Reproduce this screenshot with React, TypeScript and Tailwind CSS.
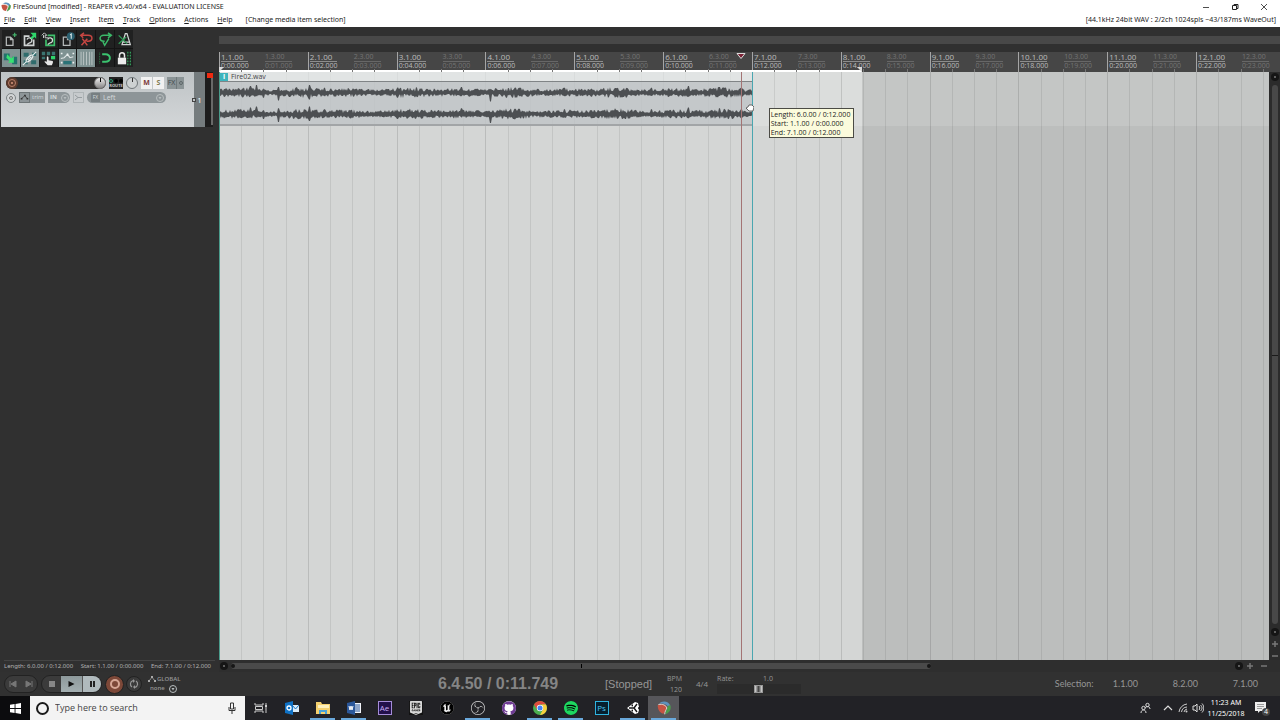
import type { ReactNode } from 'react';
import { SiEpicgames, SiGithub, SiObsstudio, SiSpotify, SiUnrealengine } from 'react-icons/si';

const menus = ['File', 'Edit', 'View', 'Insert', 'Item', 'Track', 'Options', 'Actions', 'Help'];
const measures = Array.from({ length: 12 }, (_, i) => i + 1);

const pad = (n: number) => String(n).padStart(2, '0');

// Peaks that stand out of the noise: x position -> height up, height down
const spikes: Record<number, [number, number]> = {
  31: [7, 3], 37: [8, 3], 44: [4, 5], 59: [6, 8], 90: [8, 7], 105: [5, 3], 178: [2, 5],
  242: [6, 3], 258: [4, 2], 271: [2, 9], 296: [5, 4], 300: [5, 3], 345: [5, 3], 372: [4, 4],
  398: [4, 3], 432: [5, 3], 469: [7, 4], 500: [6, 3], 505: [5, 3], 522: [5, 4],
};

function wavePath(mid: number, seed: number) {
  let s = seed;
  const rand = () => {
    s = (s * 16807) % 2147483647;
    return s / 2147483647;
  };
  const top: string[] = [];
  const bottom: string[] = [];
  for (let x = 0; x <= 533; x++) {
    const swell = 2.3 + 0.9 * Math.sin(x / 11) * Math.sin(x / 37);
    const [up, down] = spikes[x] ?? spikes[x - 1] ?? [0, 0];
    top.push(`${x},${(mid - Math.max(up, 1.2 + rand() * swell * 1.6)).toFixed(1)}`);
    bottom.unshift(`${x},${(mid + Math.max(down, 1.2 + rand() * swell * 1.4)).toFixed(1)}`);
  }
  return `M${top.join('L')}L${bottom.join('L')}Z`;
}

function ReaperLogo({ className }: { className: string }) {
  return (
    <svg viewBox="0 0 20 20" className={className} aria-hidden="true">
      <path d="M3 4C7-1 17 0 19 7l-3 2C14 5 9 3 3 4Z" fill="#5f93bd" />
      <path d="M1 6c7-3 13 0 13 4l-4 8C4 18 1 12 1 6Z" fill="#c65443" />
      <path d="M12 19c6-2 9-8 7-13-4 0-4 3-5 6-1 2-2 4-2 7Z" fill="#4c9c4d" />
      <path d="M2 5c6-1 11 1 12 5-1 3-3 5-3 9" fill="none" stroke="#e9e1dc" strokeWidth="1.3" />
    </svg>
  );
}

const doc = <path d="M4 6h5l3 3v7H4ZM9 6v3h3" fill="none" stroke="#b5b9b9" strokeWidth="1.5" />;

const tools: { name: string; active?: boolean; icon: ReactNode }[] = [
  { name: 'New project', icon: <>{doc}<path d="M14 1v5M11.500 3.500h5" stroke="#43b06a" strokeWidth="1.5" /></> },
  {
    name: 'Open project',
    icon: (
      <>
        <path d="M2 4h7v2H4v9h9V9h2v8H2Z" fill="#d0d4d4" />
        <path d="M6 9a3 3 0 1 1 3 4l-3 2" fill="none" stroke="#d0d4d4" strokeWidth="1.600" />
        <path d="M10 1h7v7l-2-2-3 3-2-2 3-3Z" fill="#2fd46b" />
      </>
    ),
  },
  {
    name: 'Save project',
    icon: (
      <>
        <path d="M8 3h9v14H5V9h2v6h8V5H8Z" fill="#3fc06c" />
        <path d="M8 9a3 3 0 1 1 3 4l-3 2" fill="none" stroke="#d4dcd6" strokeWidth="1.500" />
        <path d="M1 4l3-3 3 3H5v3h4M3 7V4Z" fill="none" stroke="#c5c9c9" strokeWidth="1.200" />
      </>
    ),
  },
  {
    name: 'Project settings',
    icon: (
      <>
        {doc}
        <circle cx="13" cy="5" r="4.700" fill="#2b6070" />
        <path d="M12 3.500l1.500-1V8" fill="none" stroke="#d7e6e8" strokeWidth="1.300" />
      </>
    ),
  },
  {
    name: 'Undo',
    icon: <path d="M2 4h9c6 0 6 7 0 7H9M6 1L2 4l3 3M4 8l6 8M10 8l-7 8" fill="none" stroke="#c54642" strokeWidth="1.8" />,
  },
  {
    name: 'Redo',
    icon: <path d="M16 4H7c-6 0-6 7 0 7h1M12 1l4 3-4 3M6 12l2 4 5-8" fill="none" stroke="#3bb869" strokeWidth="1.8" />,
  },
  {
    name: 'Metronome',
    icon: (
      <>
        <path d="M10 2h2l4 13H6ZM7 12h8" fill="none" stroke="#d0d4d4" strokeWidth="1.500" />
        <path d="M2 4l10 10M11 6l-9 8" stroke="#2f9c57" strokeWidth="1.500" />
      </>
    ),
  },
  {
    name: 'Auto-crossfade',
    active: true,
    icon: <><path d="M1 3h7v8H1ZM11 7h6v9h-6Z" fill="#23736d" /><path d="M5 4l5 5 3-3v8H6l2-2-4-4Z" fill="#37e272" /></>,
  },
  {
    name: 'Item grouping',
    active: true,
    icon: (
      <>
        <path d="M2 2h6v5H2ZM11 11h6v5h-6ZM2 11h5v5H2ZM12 2h5v4h-5Z" fill="#2f6c6c" />
        <path d="M1 17l4-4M5 13c-1-3 5-9 8-8 1 3-5 9-8 8ZM7 11l4-4M13 5l4-4" fill="none" stroke="#e8eeee" strokeWidth="1.3" />
      </>
    ),
  },
  {
    name: 'Ripple editing',
    icon: (
      <>
        <path d="M1 1h4v4H1ZM7 1h4v4H7ZM13 1h4v4h-4ZM1 7h4v3H1Z" fill="#3b7571" />
        <path d="M12 6h5v4h-5Z" fill="#2fd46b" />
        <path d="M7 7c1-1 2 0 2 1v3l5 1c1 1 0 3-1 5H8l-4-4c0-1 2-1 3 0Z" fill="#e6e6e6" />
      </>
    ),
  },
  {
    name: 'Envelopes follow items',
    active: true,
    icon: (
      <>
        <path d="M4 12h10v4H4Z" fill="#2b7377" />
        <path d="M1 9l4-1 4-4 3 4 4-1" fill="none" stroke="#e0e6e6" strokeWidth="1.3" />
        <path d="M1 2h2v2H1ZM15 2h2v2h-2ZM1 13h2v2H1ZM15 13h2v2h-2ZM8 3h2v2H8Z" fill="#eef2f2" />
      </>
    ),
  },
  { name: 'Grid lines', active: true, icon: <path d="M2.500 1v16M5.500 1v16M9 1v16M12.500 1v16M15.500 1v16" stroke="#c3cbcb" /> },
  {
    name: 'Snapping',
    icon: (
      <>
        <path d="M5 4h4c7 0 7 9 0 9H5" fill="none" stroke="#3bc36f" strokeWidth="2.400" />
        <path d="M2 2v14" stroke="#2f8f55" strokeDasharray="1 1" />
      </>
    ),
  },
  {
    name: 'Locking',
    icon: (
      <>
        <path d="M1 8h10v8H1Z" fill="#ececec" />
        <path d="M3 8V5c0-4 6-4 6 0v3" fill="none" stroke="#ececec" strokeWidth="1.800" />
        <path d="M13 1v16M16 1v16" stroke="#35ad62" strokeWidth="1.300" strokeDasharray="2 1.500" />
      </>
    ),
  },
];

function Toolbar() {
  return (
    <div className="mx-0.5 mt-[3px] grid w-[131px] grid-cols-7 gap-px bg-[#141414]">
      {tools.map((tool) => (
        <button
          key={tool.name}
          aria-label={tool.name}
          className={`flex h-[18px] items-center justify-center ${tool.active ? 'bg-[#7f9292]' : 'bg-[#202121]'}`}
        >
          <svg viewBox="0 0 18 18" className="size-[15px]">{tool.icon}</svg>
        </button>
      ))}
    </div>
  );
}

function Knob({ label, className }: { label: string; className: string }) {
  return (
    <button aria-label={label} className={`flex size-3 shrink-0 justify-center rounded-full border ${className}`}>
      <span className="h-1 w-px bg-current" />
    </button>
  );
}

function DownCircle() {
  return (
    <svg viewBox="0 0 10 10" className="size-2.5 shrink-0" aria-hidden="true">
      <circle cx="5" cy="5" r="3.500" fill="none" stroke="#b8bebf" />
      <path d="M3.500 4h3L5 6.500Z" fill="#b8bebf" />
    </svg>
  );
}

function TrackPanel() {
  return (
    <section className="mt-[5px] ml-px flex h-[55px] w-[212px] bg-[#2a2a2a]" aria-label="Track 1">
      <div className="flex flex-1 flex-col gap-[3px] bg-linear-to-b from-[#bec3c5] to-[#d3d6d8] pt-[5px] pl-[5px]">
        <div className="flex h-3 items-center gap-[3px]">
          <div className="flex h-3 w-[100px] items-center rounded-full bg-[#2d2d2d]">
            <button aria-label="Record arm" className="flex size-3 items-center justify-center rounded-full bg-[#5c3a2c]">
              <span className="flex size-2 items-center justify-center rounded-full border border-[#b98069]">
                <span className="size-0.5 bg-[#b98069]" />
              </span>
            </button>
            <input aria-label="Track name" className="h-3 min-w-0 flex-1 bg-transparent px-1 text-[7px] text-gray-300 outline-none" />
            <Knob label="Volume" className="border-[#777] bg-linear-to-b from-[#eee] to-[#888] text-black" />
          </div>
          <button className="flex h-3 w-[14px] flex-col items-center bg-[#232323] text-[4px] leading-[5px] font-bold text-[#c5c5c5]">
            <span className="flex h-1.5 items-center gap-px pt-px">
              <span className="size-1 rounded-full border border-[#2c9a73]" />
              <span className="size-1 rounded-full bg-black" />
              <span className="size-1 rounded-full bg-black" />
            </span>
            ROUTE
          </button>
          <Knob label="Pan" className="border-[#70777a] bg-[#cdd1d2] text-[#333]" />
          <div className="flex h-3 gap-px text-[7px] leading-3 font-bold">
            <button className="w-[11px] bg-[#f1f1f1] text-[#7d3939]">M</button>
            <button className="w-[11px] bg-[#f1f1f1] text-[#827b50]">S</button>
          </div>
          <div className="flex h-3 bg-[#8b9496] text-[7px] leading-3 text-[#3f494b]">
            <button className="w-2.5 border-r border-[#70797b]">FX</button>
            <button aria-label="Bypass FX" className="flex w-[7px] items-center justify-center">
              <span className="size-1 rounded-full border border-[#5d6769]" />
            </button>
          </div>
        </div>
        <div className="flex h-[11px] items-center gap-[3px] text-[7px] leading-[11px] text-[#d5dadb]">
          <button aria-label="Phase" className="flex size-[10px] items-center justify-center rounded-full border border-[#7d8385] bg-[#d3d6d7]">
            <span className="size-1 rounded-full border border-[#777]" />
          </button>
          <button className="flex h-[11px] w-[26px] items-center gap-0.5 bg-[#8d9598] text-[6px]">
            <svg viewBox="0 0 11 11" className="size-[11px] shrink-0 border border-[#6d7577]" aria-hidden="true">
              <path d="M1 7l2-1 3-3 2 3 2 1" fill="none" stroke="#333" />
              <path d="M1 6h2v2H1ZM5 2h2v2H5ZM8 6h2v2H8Z" fill="#333" />
            </svg>
            trim
          </button>
          <button className="flex h-[11px] w-[22px] items-center justify-between rounded-r-full bg-[#8d9598] pl-0.5 text-[6px] font-bold">
            IN
            <DownCircle />
          </button>
          <button aria-label="Input monitoring" className="size-[11px] border border-[#aeb4b6]">
            <svg viewBox="0 0 9 9" className="size-[9px]">
              <path d="M1 2l3 2.500L1 7M4 4.500h4" fill="none" stroke="#969da0" />
            </svg>
          </button>
          <div className="flex h-[11px] w-[79px] items-center rounded-full bg-[#8d9598] pr-px">
            <span className="ml-1 size-[9px] bg-[#777f82] text-center text-[5px] leading-[9px]">FX</span>
            <select aria-label="Record input" className="h-[11px] min-w-0 flex-1 appearance-none bg-transparent px-[3px] outline-none">
              <option>Left</option>
            </select>
            <DownCircle />
          </div>
        </div>
      </div>
      <div className="relative flex w-[11px] items-center justify-center bg-[#757c7e] text-[8px] text-white">
        <span className="absolute -left-0.5 size-1 border border-[#444] bg-[#c0c5c7]" />
        1
      </div>
      <div className="flex w-[8px] justify-end bg-[#1d1d1d] pt-px">
        <span className="mr-px h-[5px] w-1.5 bg-[#ef2a10]" />
        <span className="mt-[5px] -ml-[3px] h-[47px] w-0.5 bg-[#696969]" />
      </div>
    </section>
  );
}

function Ruler() {
  return (
    <div className="relative flex h-5 overflow-hidden bg-[#464646] pr-[11px]">
      <div className="flex w-full">
        {measures.map((m) => (
          <div key={m} className="flex w-[8.46%] shrink-0 border-l border-[#a5a5a5]">
            <div className="w-1/2 pl-px text-[#bcbcbc]">
              <span className="block w-[27px] border-b border-[#8d8d8d] text-[8px] leading-[9px]">{m}.1.00</span>
              <span className="block text-[7px] leading-[7px]">0:{pad(m * 2 - 2)}.000</span>
            </div>
            <div className="w-1/2 pl-px text-[#747474]">
              <span className="block w-[27px] border-b border-[#676767] text-[7px] leading-[9px]">{m}.3.00</span>
              <span className="block text-[7px] leading-[7px]">0:{pad(m * 2 - 1)}.000</span>
            </div>
          </div>
        ))}
      </div>
      <div className="absolute inset-x-0 bottom-0 flex h-0.5 pr-[11px]">
        <div className="relative w-[61.25%] bg-white">
          <span className="absolute bottom-0 left-0 border-t-[5px] border-r-[5px] border-t-[#d8d8d8] border-r-transparent" />
          <span className="absolute right-0 bottom-0 border-t-[5px] border-l-[5px] border-t-[#d8d8d8] border-l-transparent" />
        </div>
      </div>
      <div className="absolute inset-x-0 bottom-0 flex h-[3px] pr-[11px]">
        {measures.map((m) => (
          <div key={m} className="grid w-[8.46%] shrink-0 grid-cols-4">
            <span />
            <span className="border-l border-[#777]" />
            <span className="border-l border-[#777]" />
            <span className="border-l border-[#777]" />
          </div>
        ))}
      </div>
    </div>
  );
}

function Arrange() {
  return (
    <div className="relative min-h-0 flex-1 overflow-hidden bg-[#bcbebd]">
      {/* track lane and time selection */}
      <div className="absolute inset-0 flex">
        <div className="w-[61.25%] bg-[#d4d6d5]"><div className="h-[54px] bg-[#dbdddc]" /></div>
        <div className="flex-1"><div className="h-[54px] bg-[#c4c6c5]" /></div>
      </div>
      <div className="absolute inset-0 flex">
        {measures.map((m) => (
          <div key={m} className="grid w-[8.46%] shrink-0 grid-cols-4">
            <span className="border-l border-black/12" />
            <span className="border-l border-black/8" />
            <span className="border-l border-black/8" />
            <span className="border-l border-black/8" />
          </div>
        ))}
      </div>

      {/* media item */}
      <div className="absolute top-0 left-0 h-[54px] w-[50.76%] border-b-2 border-[#a2a5a7]">
        <div className="flex h-[9px] items-center gap-[3px] bg-[#e4e7e7]/70 pl-px text-[7px] leading-[9px] text-[#444]">
          <span className="h-2 w-2 bg-[#3eb4bd] text-center leading-2 font-bold text-white">i</span>
          Fire02.wav
        </div>
        <svg
          viewBox="0 0 533 43"
          preserveAspectRatio="none"
          className="h-[43px] w-full border-t border-[#808486] bg-[#bfc4c7]/85"
          aria-label="Fire02.wav waveform"
        >
          <path d={wavePath(11, 4711)} fill="#4c4f52" />
          <path d={wavePath(33, 1234)} fill="#4c4f52" />
        </svg>
      </div>

      {/* edit cursor, item edge, mouse */}
      <div className="absolute top-0 bottom-0 left-0 w-px bg-[#4a9c8c]" />
      <div className="absolute top-0 bottom-0 left-[49.7%] w-px bg-[#a37474]" />
      <div className="absolute top-0 bottom-0 left-[50.76%] w-px bg-[#4aa6b0]" />
      <svg viewBox="0 0 8 8" className="absolute top-8 left-[50.2%] size-2" aria-hidden="true">
        <path d="M2 3l1-2h3l2 2-1 4H3L0 4Z" fill="#fff" stroke="#333" strokeWidth=".7" />
      </svg>
      <div
        role="tooltip"
        className="absolute top-[36px] left-[52.35%] w-[85px] border border-[#4b4b45] bg-[#fbfbdc] pt-px pl-px text-[7px] leading-[9px] whitespace-nowrap text-[#222]"
      >
        <p>Length: 6.0.00 / 0:12.000</p>
        <p>Start: 1.1.00 / 0:00.000</p>
        <p>End: 7.1.00 / 0:12.000</p>
      </div>
    </div>
  );
}

function ScrollDot({ label }: { label: string }) {
  return (
    <button aria-label={label} className="flex size-2 shrink-0 items-center justify-center rounded-full bg-[#151515]">
      <span className="size-0.5 rounded-full bg-[#777]" />
    </button>
  );
}

function ZoomButton({ label, d }: { label: string; d: string }) {
  return (
    <button aria-label={label} className="size-2 shrink-0">
      <svg viewBox="0 0 8 8"><path d={d} stroke="#777" strokeWidth="1.500" /></svg>
    </button>
  );
}

function Timeline() {
  return (
    <div className="flex min-w-0 flex-1 flex-col">
      <div className="my-2 mt-[9px] h-2 bg-[#484848]" />
      <div className="relative">
        <Ruler />
        <svg viewBox="0 0 10 6" className="absolute top-px left-[48.7%] h-1.5 w-2.5" aria-hidden="true">
          <path d="M1 .5h8L5 5.500Z" fill="#7a2034" stroke="#ddd" />
        </svg>
      </div>
      <div className="flex min-h-0 flex-1">
        <Arrange />
        <div className="flex w-[11px] flex-col items-center gap-1 bg-[#2b2b2b] pt-px">
          <ScrollDot label="Scroll up" />
          <div className="relative w-1.5 flex-1 rounded-full bg-[#484848]">
            <span className="absolute top-1/2 left-0 h-px w-1.5 bg-[#1a1a1a]" />
          </div>
          <ScrollDot label="Scroll down" />
          <ZoomButton label="Zoom in vertically" d="M1 4h6M4 1v6" />
          <ZoomButton label="Zoom out vertically" d="M1 4h6" />
        </div>
      </div>
      <div className="flex h-3 items-center gap-[3px] bg-[#2e2e2e] pr-3 pl-px">
        <ScrollDot label="Scroll left" />
        <div className="flex h-1.5 w-[700px] items-center justify-between rounded-full bg-[#4a4a4a]">
          <span className="size-1 rounded-full bg-[#161616]" />
          <span className="h-1 w-px bg-black" />
          <span className="size-1 rounded-full bg-[#161616]" />
        </div>
        <span className="flex-1" />
        <ScrollDot label="Scroll right" />
        <ZoomButton label="Zoom in" d="M1 4h6M4 1v6" />
        <span />
        <ZoomButton label="Zoom out" d="M1 4h6" />
      </div>
    </div>
  );
}

function Transport() {
  return (
    <footer className="flex h-6 items-center bg-[#313131] pr-[22px] pl-1 text-[#969696]">
      <div className="flex h-[18px] w-[34px] items-center rounded-full border border-[#222] bg-[#3b3b3b]">
        <button aria-label="Go to start" className="flex-1">
          <svg viewBox="0 0 16 10" className="h-2.5 w-full"><path d="M5 2v6M11 2v6L6 5Z" stroke="#777" fill="#777" /></svg>
        </button>
        <button aria-label="Go to end" className="flex-1">
          <svg viewBox="0 0 16 10" className="h-2.5 w-full"><path d="M11 2v6M5 2v6l5-3Z" stroke="#777" fill="#777" /></svg>
        </button>
      </div>
      <div className="ml-[3px] flex h-[18px] w-[61px] overflow-hidden rounded-full border border-[#222] bg-[#3b3b3b]">
        <button aria-label="Stop" className="flex w-[19px] items-center justify-center"><span className="size-1.5 bg-[#888]" /></button>
        <button aria-label="Play" className="w-[22px] border-r border-[#555] bg-linear-to-b from-[#8d999b] to-[#a4afb1]">
          <svg viewBox="0 0 20 16" className="h-4 w-full"><path d="M7 5v6l6-3Z" fill="#111" /></svg>
        </button>
        <button aria-label="Pause" className="flex flex-1 items-center justify-center gap-px bg-[#b0babd]">
          <span className="h-1.5 w-0.5 bg-[#222]" />
          <span className="h-1.5 w-0.5 bg-[#222]" />
        </button>
      </div>
      <button aria-label="Record" className="ml-[3px] flex size-[19px] items-center justify-center rounded-full border border-[#222] bg-[#7d4838]">
        <span className="size-2.5 rounded-full border-2 border-[#d6a695]" />
      </button>
      <button aria-label="Repeat" className="ml-0.5 flex size-4 items-center justify-center rounded-full border border-[#222] bg-[#3b3b3b]">
        <svg viewBox="0 0 10 10" className="size-2.5">
          <path d="M3 8A3.500 3.500 0 0 1 4 1.700M7 2a3.500 3.500 0 0 1-1 6.300" fill="none" stroke="#999" strokeWidth="1.200" />
          <path d="M4 0l2 2-2 2ZM6 10L4 8l2-2Z" fill="#999" />
        </svg>
      </button>
      <div className="ml-1.5 w-[30px] text-[6px] leading-[9px] font-semibold">
        <div className="flex items-center gap-px">
          <svg viewBox="0 0 8 8" className="size-2 shrink-0" aria-hidden="true">
            <path d="M0 6l2-1 2-3 2 3 2 1" fill="none" stroke="#aaa" strokeWidth=".7" />
            <path d="M0 5h2v2H0ZM3 1h2v2H3ZM6 5h2v2H6Z" fill="#aaa" />
          </svg>
          GLOBAL
        </div>
        <button className="flex w-full items-center justify-between pl-0.5">none<DownCircle /></button>
      </div>
      <output className="ml-[260px] w-[167px] font-['Liberation_Sans'] text-[16px] font-bold text-[#858585]">
        6.4.50 / 0:11.749
      </output>
      <output className="w-[50px] font-['Liberation_Sans'] text-[11px] whitespace-nowrap">[Stopped]</output>
      <div className="ml-[5px] w-[22px] text-right text-[7px] leading-[11px]">
        <label htmlFor="bpm" className="block">BPM</label>
        <input id="bpm" defaultValue="120" className="block h-[11px] w-full bg-transparent text-right outline-none" />
      </div>
      <button className="ml-3.5 text-[8px]">4/4</button>
      <div className="ml-[9px] w-[84px] text-[7px] leading-[10px]">
        <div className="flex items-center">
          <label htmlFor="rate" className="w-[46px]">Rate:</label>
          <span>1.0</span>
        </div>
        <input
          id="rate"
          type="range"
          min="0"
          max="100"
          defaultValue="49"
          className="block h-2.5 w-full appearance-none bg-[#2b2b2b] [&::-webkit-slider-thumb]:h-2 [&::-webkit-slider-thumb]:w-[9px] [&::-webkit-slider-thumb]:appearance-none [&::-webkit-slider-thumb]:border [&::-webkit-slider-thumb]:border-[#999] [&::-webkit-slider-thumb]:bg-linear-to-r [&::-webkit-slider-thumb]:from-[#ddd] [&::-webkit-slider-thumb]:via-[#444] [&::-webkit-slider-thumb]:to-[#ddd]"
        />
      </div>
      <dl className="ml-auto flex font-['Lato'] text-[9px]">
        <dt className="w-[58px]">Selection:</dt>
        <dd className="w-[60px]">1.1.00</dd>
        <dd className="w-[60px]">8.2.00</dd>
        <dd>7.1.00</dd>
      </dl>
    </footer>
  );
}

const apps: { name: string; open?: boolean; current?: boolean; icon: ReactNode }[] = [
  {
    name: 'Task View',
    icon: (
      <svg viewBox="0 0 14 14" className="size-3.5">
        <path d="M1 2v2h8V2M1 12v-2h8v2M1.500 5.500h7v3h-7ZM12 2v10" fill="none" stroke="#ccc" />
        <path d="M11 4h2v2h-2Z" fill="#ccc" />
      </svg>
    ),
  },
  {
    name: 'Outlook',
    icon: (
      <svg viewBox="0 0 14 14" className="size-3.5">
        <path d="M7 4h7v7H7Z" fill="#dcecf8" />
        <path d="M7 4l3.500 4L14 4" fill="none" stroke="#1273c4" />
        <path d="M0 2l8-2v14l-8-2Z" fill="#0f72c6" />
        <circle cx="4" cy="7" r="2" fill="none" stroke="#fff" strokeWidth="1.300" />
      </svg>
    ),
  },
  {
    name: 'File Explorer',
    open: true,
    icon: (
      <svg viewBox="0 0 14 14" className="size-3.5">
        <path d="M0 1h5l1 2h8v10H0Z" fill="#f4d06f" />
        <path d="M2 4h11v3H2Z" fill="#fdf0bd" />
        <path d="M3 9h8v4H9v-2H5v2H3Z" fill="#4aa3d8" />
      </svg>
    ),
  },
  {
    name: 'Word',
    open: true,
    icon: (
      <svg viewBox="0 0 14 14" className="size-3.5">
        <path d="M7 2h7v10H7Z" fill="#f2f5fa" />
        <path d="M8 4h5M8 6h5M8 8h5M8 10h5" stroke="#2b579a" />
        <path d="M0 2l8-2v14l-8-2Z" fill="#2b579a" />
        <path d="M2 5l1 4 1-4 1 4 1-4" fill="none" stroke="#fff" />
      </svg>
    ),
  },
  {
    name: 'After Effects',
    icon: <span className="size-3.5 border border-[#a58cd8] bg-[#22104a] text-center text-[8px] leading-3 text-[#c9aef5]">Ae</span>,
  },
  { name: 'Epic Games', icon: <SiEpicgames className="size-3.5 bg-[#111] text-[#d8d8d8]" /> },
  { name: 'Unreal Engine', icon: <SiUnrealengine className="size-3.5 rounded-full bg-black text-[#eee]" /> },
  { name: 'OBS', open: true, icon: <SiObsstudio className="size-3.5 text-[#ddd]" /> },
  { name: 'GitHub Desktop', icon: <span className="rounded-full bg-white"><SiGithub className="size-3.5 text-[#6f3b94]" /></span> },
  {
    name: 'Chrome',
    open: true,
    icon: (
      <svg viewBox="0 0 14 14" className="size-3.5">
        <circle cx="7" cy="7" r="7" fill="#4baf50" />
        <path d="M1 3.500A7 7 0 0 1 13 3.500H7L4 8.500Z" fill="#dd4b3e" />
        <path d="M13 3.500A7 7 0 0 1 7 14L10 8.500 8.500 3.500Z" fill="#f7cf3d" />
        <circle cx="7" cy="7" r="3.200" fill="#fff" />
        <circle cx="7" cy="7" r="2.500" fill="#4285f4" />
      </svg>
    ),
  },
  { name: 'Spotify', open: true, icon: <span className="rounded-full bg-black"><SiSpotify className="size-3.5 text-[#1ed760]" /></span> },
  {
    name: 'Photoshop',
    icon: <span className="size-3.5 border border-[#2fb4e0] bg-[#06202f] text-center text-[8px] leading-3 text-[#4cc6f0]">Ps</span>,
  },
  {
    name: 'Unity',
    open: true,
    icon: (
      <svg viewBox="0 0 14 14" className="size-3.5">
        <path d="M1 7l8-6 3 1 1 4-1 1 1 2-1 3-3 1Z" fill="#fff" />
        <path d="M3 7h5M8 7l3-4M8 7l3 4" stroke="#161618" strokeWidth="1.400" />
        <path d="M7 3l-2 2 2 .5ZM7 11L5 9l2-.5ZM14 5l-2 2 2 2Z" fill="#161618" />
      </svg>
    ),
  },
  { name: 'REAPER', open: true, current: true, icon: <ReaperLogo className="size-3.5" /> },
];

function Taskbar() {
  return (
    <nav className="flex h-6 items-stretch bg-[#222226] text-white" aria-label="Taskbar">
      <button aria-label="Start" className="flex w-[30px] items-center justify-center bg-[#0c0c0e]">
        <svg viewBox="0 0 12 12" className="size-[11px]">
          <path d="M0 2l5-1v4.500H0ZM6 1l6-1v5.500H6ZM0 6.500h5V11l-5-1ZM6 6.500h6V12l-6-1Z" fill="#fff" />
        </svg>
      </button>
      <label className="flex w-[215px] items-center bg-[#f3f3f3] pr-[9px] pl-1.5">
        <span className="size-[13px] rounded-full border-2 border-[#1a1a1a]" />
        <input
          aria-label="Search"
          placeholder="Type here to search"
          className="min-w-0 flex-1 bg-transparent pl-1.5 text-[9px] outline-none placeholder:text-[#444]"
        />
        <svg viewBox="0 0 8 12" className="h-3 w-2" aria-hidden="true">
          <path d="M2.500 1h3v6h-3ZM1 5v3.500h6V5M4 9v3" fill="none" stroke="#333" />
        </svg>
      </label>
      {apps.map((app) => (
        <button
          key={app.name}
          aria-label={app.name}
          className={`relative flex w-[31px] items-center justify-center ${app.current ? 'bg-[#56565a]' : ''}`}
        >
          {app.icon}
          {app.open && <span className="absolute inset-x-[3px] bottom-0 h-0.5 bg-[#6aa9dc]" />}
        </button>
      ))}
      <div className="ml-auto flex items-center gap-[3px] pr-2.5">
        <svg viewBox="0 0 12 12" className="mr-2 size-3" aria-label="People">
          <path d="M2 11c0-4 5-4 5 0M6 6c1-2 5-2 5 1" fill="none" stroke="#ddd" />
          <circle cx="4.500" cy="6" r="1.700" fill="none" stroke="#ddd" />
          <circle cx="8.500" cy="3" r="1.700" fill="none" stroke="#ddd" />
        </svg>
        <svg viewBox="0 0 12 12" className="size-3" aria-label="Hidden icons">
          <path d="M2 8l4-4 4 4" fill="none" stroke="#ddd" strokeWidth="1.200" />
        </svg>
        <svg viewBox="0 0 12 12" className="size-3" aria-label="Network">
          <path d="M2 10A9 9 0 0 1 10 2M4.500 10A6 6 0 0 1 10 5M7 10a4 4 0 0 1 3-3" fill="none" stroke="#ccc" />
          <circle cx="9.500" cy="9.500" r="1" fill="#ccc" />
        </svg>
        <svg viewBox="0 0 12 12" className="size-3" aria-label="Volume">
          <path d="M1 4h2l2-2v8L3 8H1ZM7 4c1 1 1 3 0 4M8.500 3c2 2 2 4 0 6M10 1.500c2.500 3 2.500 6 0 9" fill="none" stroke="#ddd" />
        </svg>
        <time className="w-[38px] text-center font-['Noto_Sans'] text-[7px] leading-[11px]">
          11:23 AM
          <br />
          11/25/2018
        </time>
        <button aria-label="4 notifications" className="relative ml-1.5 size-4">
          <svg viewBox="0 0 16 16" className="size-4">
            <path d="M1 2h11v9H6l-2 2v-2H1Z" fill="#eee" />
            <path d="M3 4.500h7M3 6.500h7M3 8.500h5" stroke="#777" strokeWidth=".7" />
          </svg>
          <span className="absolute right-0 bottom-0 size-2 rounded-full bg-[#444] text-[7px] leading-2">4</span>
        </button>
      </div>
    </nav>
  );
}

export default function App() {
  return (
    <div className="flex h-screen flex-col overflow-hidden bg-[#303030] font-['Open_Sans',sans-serif] text-[8px]">
      <header className="bg-white font-['Noto_Sans',sans-serif] text-[7px] text-[#1c1c1c]">
        <div className="flex h-3.5 items-center gap-0.5 pl-px">
          <ReaperLogo className="size-2.5" />
          <h1>FireSound [modified] - REAPER v5.40/x64 - EVALUATION LICENSE</h1>
          <div className="ml-auto flex gap-[19px] pr-[11px]">
            <button aria-label="Minimize" className="size-2.5">
              <svg viewBox="0 0 10 10"><path d="M2 5.500h6" stroke="#222" strokeWidth=".8" /></svg>
            </button>
            <button aria-label="Restore" className="size-2.5">
              <svg viewBox="0 0 10 10"><path d="M2.500 3.500h4v4h-4ZM4 3.500v-1h4v4H6.500" fill="none" stroke="#222" /></svg>
            </button>
            <button aria-label="Close" className="size-2.5">
              <svg viewBox="0 0 10 10"><path d="M2 2l6 6M8 2L2 8" stroke="#222" strokeWidth=".8" /></svg>
            </button>
          </div>
        </div>
        <nav className="flex h-[13px] items-center gap-[9px] px-1" aria-label="Main menu">
          {menus.map((menu) => (
            <button key={menu}>
              {menu === 'Item' ? <>Ite<u>m</u></> : <><u>{menu[0]}</u>{menu.slice(1)}</>}
            </button>
          ))}
          <span className="ml-1">[Change media item selection]</span>
          <span className="ml-auto">[44.1kHz 24bit WAV : 2/2ch 1024spls ~43/187ms WaveOut]</span>
        </nav>
      </header>

      <main className="flex min-h-0 flex-1">
        <aside className="flex w-[219px] shrink-0 flex-col">
          <Toolbar />
          <TrackPanel />
          <div className="mx-1 mt-auto border-t border-[#444] pr-1">
            <p className="flex justify-between font-['Noto_Sans'] text-[6px] leading-[11px] text-[#b0b0b0]">
              <span>Length: 6.0.00 / 0:12.000</span>
              <span>Start: 1.1.00 / 0:00.000</span>
              <span>End: 7.1.00 / 0:12.000</span>
            </p>
          </div>
        </aside>
        <Timeline />
      </main>

      <Transport />
      <Taskbar />
    </div>
  );
}
